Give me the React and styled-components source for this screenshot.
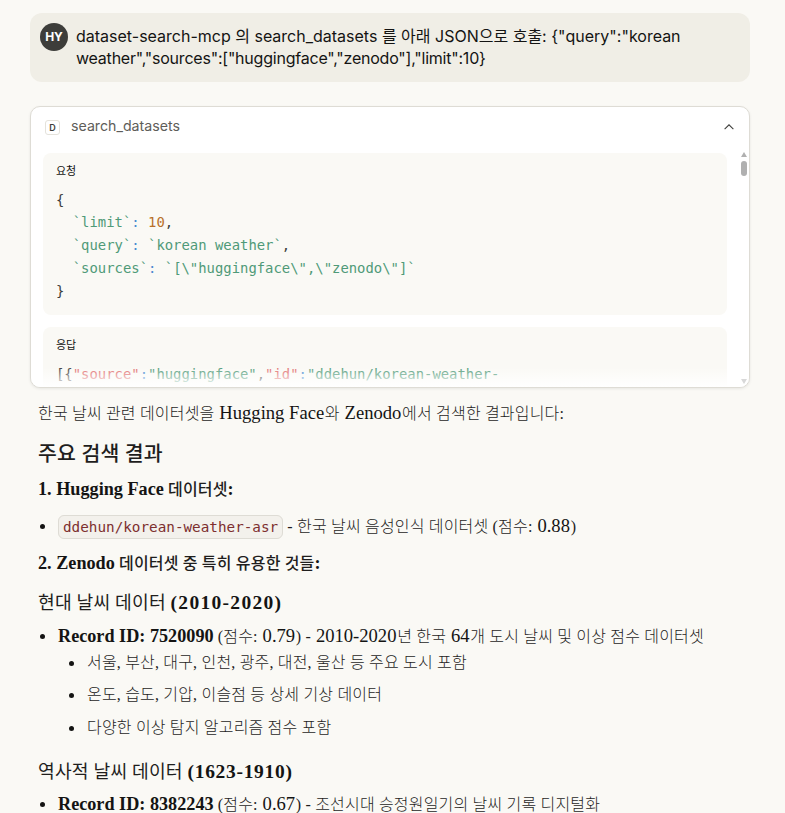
import React from 'react';
import styled, { createGlobalStyle } from 'styled-components';

const Global = createGlobalStyle`
  html, body { margin: 0; padding: 0; background: #faf9f5; height: 813px; overflow: hidden; }
  * { box-sizing: border-box; }
`;
const sans = `Inter, "Noto Sans CJK KR", sans-serif`;
const serif = `"Liberation Serif", "Noto Sans CJK KR", serif`;
const mono = `"DejaVu Sans Mono", monospace`;

const Page = styled.div`
  padding: 13px 35px 0 30px;
  height: 813px;
  overflow: hidden;
`;
const Bubble = styled.div`
  display: flex;
  gap: 8px;
  background: #f0eee6;
  border-radius: 12px;
  padding: 10px;
  height: 69px;
`;
const Avatar = styled.div`
  flex: none;
  width: 28px;
  height: 28px;
  border-radius: 50%;
  background: #3d3d3a;
  color: #fff;
  font: 700 12px/28px ${sans};
  text-align: center;
`;
const Prompt = styled.div`
  font: 400 16px/22.4px ${sans};
  color: #141413;
  padding-top: 2px;
`;
const Tight = styled.span`letter-spacing: -0.22px;`;
const Card = styled.div`
  position: relative;
  margin-top: 24px;
  height: 282px;
  background: #fff;
  border: 1px solid #dedcd5;
  border-radius: 10px;
  box-shadow: 0 1px 3px rgba(0,0,0,.08);
  overflow: hidden;
`;
const CardHead = styled.div`
  display: flex;
  align-items: center;
  height: 40px;
  padding: 0 13px 0 14px;
  gap: 11px;
  color: #5e5d59;
  font: 400 14.2px ${sans};
`;
const ToolName = styled.span`margin-bottom: 3px;`;
const ServerIcon = styled.div`
  width: 15px;
  height: 15px;
  border: 1px solid #e4e2db;
  border-radius: 3px;
  color: #3d3d3a;
  font: 600 9px/13px ${sans};
  text-align: center;
`;
const Spacer = styled.div`flex: 1;`;
const Chevron = styled.svg`
  width: 14px;
  height: 14px;
  color: #3d3d3a;
`;
const CodeBox = styled.div`
  margin: ${p => p.$top}px 22px 0 12px;
  background: #faf9f5;
  border-radius: 8px;
  padding: 9px 13px 0;
  height: ${p => p.$h}px;
`;
const BoxLabel = styled.div`
  font: 400 11px/16px "Noto Sans CJK KR", sans-serif;
  color: #141413;
`;
const Code = styled.pre`
  margin: ${p => p.$top}px 0 0;
  font: 400 13.9px/22.75px ${mono};
  color: #3d3d3a;
  white-space: pre;
`;
const Str = styled.span`color: #4f9a78;`;
const Num = styled.span`color: #b8702a;`;
const Punc = styled.span`color: #4a8bd0;`;
const Key = styled.span`color: #e06c6c;`;
const Fade = styled.div`
  position: absolute;
  left: 0;
  right: 0;
  bottom: 0;
  height: 20px;
  background: linear-gradient(rgba(255,255,255,0), #fff);
`;
const ScrollThumb = styled.div`
  position: absolute;
  right: 2px;
  top: 54px;
  width: 6px;
  height: 15px;
  border-radius: 3px;
  background: #b0b0b0;
`;
const ScrollArrow = styled.div`
  position: absolute;
  right: 2px;
  ${p => p.$up ? 'top: 45px;' : 'bottom: 3px;'}
  width: 0;
  height: 0;
  border-left: 3px solid transparent;
  border-right: 3px solid transparent;
  ${p => p.$up ? 'border-bottom: 5px solid #b0b0b0;' : 'border-top: 5px solid #d8d8d8;'}
`;
const Article = styled.div`
  margin-left: 8px;
  margin-right: -8px;
  color: #1f1e1d;
  font: 300 16px/24px ${serif};
  letter-spacing: 0.18px;
`;
const L = styled.span`
  font-size: ${p => p.$bold ? 18.2 : 18.6}px;
  margin: ${p => p.$bold ? 0 : '0 0.7px'};
  letter-spacing: 0;
  color: #141413;
  font-weight: ${p => p.$bold ? 700 : 400};
`;
const Num3 = styled.span`
  font-size: 19.5px;
  letter-spacing: ${p => p.$ls}px;
  font-weight: 700;
  color: #141413;
`;
const P = styled.div`
  margin-top: ${p => p.$top}px;
  font-weight: ${p => p.$medium ? 500 : 300};
`;
const H2 = styled.div`
  margin-top: ${p => p.$top}px;
  font-size: 20.5px;
  line-height: 28px;
  font-weight: 500;
`;
const H3 = styled.div`
  margin-top: ${p => p.$top}px;
  font-size: 18.2px;
  line-height: 26px;
  font-weight: 400;
`;
const List = styled.ul`
  margin: ${p => p.$top}px 0 0;
  padding-left: ${p => p.$indent}px;
  list-style: none;
`;
const Item = styled.li`
  position: relative;
  margin-top: ${p => p.$top || 0}px;
  &::before {
    content: "";
    position: absolute;
    left: -18px;
    top: 10px;
    width: 5px;
    height: 5px;
    border-radius: 50%;
    background: #141413;
  }
`;
const InlineCode = styled.code`
  font: 400 14.3px/20px ${mono};
  color: #7d2f2f;
  background: #f3f1ec;
  border: 1px solid #dedcd5;
  border-radius: 6px;
  padding: 3px 4px;
  letter-spacing: 0;
`;

export default function App() {
  return (
    <>
      <Global />
      <Page>
        <Bubble>
          <Avatar>HY</Avatar>
          <Prompt>
            dataset-search-mcp 의 search_datasets 를 아래 JSON으로 호출: {'{"query":"korean'}
            <br />
            <Tight>{'weather","sources":["huggingface","zenodo"],"limit":10}'}</Tight>
          </Prompt>
        </Bubble>
        <Card>
          <CardHead>
            <ServerIcon>D</ServerIcon>
            <ToolName>search_datasets</ToolName>
            <Spacer />
            <Chevron viewBox="0 0 16 16" fill="none" stroke="currentColor" strokeWidth="1.2">
              <path d="M3 10.5 8 5.5l5 5" />
            </Chevron>
          </CardHead>
          <CodeBox $top={6} $h={162}>
            <BoxLabel>요청</BoxLabel>
            <Code $top={10.6}>
              {'{\n  '}
              <Str>`limit`</Str><Punc>:</Punc> <Num>10</Num>{',\n  '}
              <Str>`query`</Str><Punc>:</Punc> <Str>`korean weather`</Str>{',\n  '}
              <Str>`sources`</Str><Punc>:</Punc> <Str>{'`[\\"huggingface\\",\\"zenodo\\"]`'}</Str>{'\n}'}
            </Code>
          </CodeBox>
          <CodeBox $top={12} $h={80}>
            <BoxLabel>응답</BoxLabel>
            <Code $top={11}>
              {'[{'}<Key>"source"</Key><Punc>:</Punc><Str>"huggingface"</Str>,<Key>"id"</Key><Punc>:</Punc><Str>"ddehun/korean-weather-</Str>
            </Code>
          </CodeBox>
          <Fade />
          <ScrollArrow $up />
          <ScrollThumb />
          <ScrollArrow />
        </Card>
        <Article>
          <P $top={13}>한국 날씨 관련 데이터셋을 <L>Hugging Face</L>와 <L>Zenodo</L>에서 검색한 결과입니다:</P>
          <H2 $top={14}>주요 검색 결과</H2>
          <P $top={9} $medium><L $bold>1. Hugging Face</L> 데이터셋<L $bold>:</L></P>
          <List $top={12} $indent={20}>
            <Item><InlineCode>ddehun/korean-weather-asr</InlineCode> - 한국 날씨 음성인식 데이터셋 (점수: <L>0.88</L>)</Item>
          </List>
          <P $top={12} $medium><L $bold>2. Zenodo</L> 데이터셋 중 특히 유용한 것들<L $bold>:</L></P>
          <H3 $top={14}>현대 날씨 데이터 <Num3 $ls={1.3}>(2010-2020)</Num3></H3>
          <List $top={8} $indent={20}>
            <Item>
              <L $bold>Record ID: 7520090</L> (점수: <L>0.79</L>) - <L>2010-2020</L>년 한국 <L>64</L>개 도시 날씨 및 이상 점수 데이터셋
              <List $top={2} $indent={29}>
                <Item>서울, 부산, 대구, 인천, 광주, 대전, 울산 등 주요 도시 포함</Item>
                <Item $top={8}>온도, 습도, 기압, 이슬점 등 상세 기상 데이터</Item>
                <Item $top={9}>다양한 이상 탐지 알고리즘 점수 포함</Item>
              </List>
            </Item>
          </List>
          <H3 $top={19}>역사적 날씨 데이터 <Num3 $ls={0.7}>(1623-1910)</Num3></H3>
          <List $top={7} $indent={20}>
            <Item><L $bold>Record ID: 8382243</L> (점수: <L>0.67</L>) - 조선시대 승정원일기의 날씨 기록 디지털화</Item>
          </List>
        </Article>
      </Page>
    </>
  );
}
